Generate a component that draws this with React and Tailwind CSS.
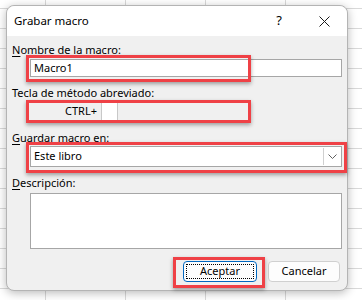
import React from 'react';

const Label = ({ mnemonic, rest }) => (
  <div className="h-[16px] leading-[16px] text-[11px] text-black">
    <span className="underline underline-offset-[2px]">{mnemonic}</span>
    {rest}
  </div>
);

// red annotation frames drawn over the dialog
const Highlight = ({ className }) => (
  <div
    className={`absolute border-[3px] border-[#ef4146] shadow-[0_2px_4px_rgba(0,0,0,0.35)] pointer-events-none ${className}`}
  />
);

export default function App() {
  return (
    <div
      className="relative w-[362px] h-[300px] overflow-hidden bg-white pt-[5px] pl-[6px] bg-[linear-gradient(to_right,#d9d9d9_1px,transparent_1px),linear-gradient(to_bottom,#d9d9d9_1px,transparent_1px)] bg-[size:80px_20px] bg-[position:45px_8px]"
      style={{ fontFamily: '"Noto Sans", "Open Sans", sans-serif' }}
    >
      <div className="w-[342px] h-[286px] rounded-[8px] bg-[#f0f0f0] border border-[#b4b4b4] shadow-[0_2px_10px_rgba(0,0,0,0.28)] flex flex-col">
        {/* title bar */}
        <div className="h-[30px] shrink-0 bg-white rounded-t-[8px] flex items-center pl-[7px] text-[11.5px] text-black">
          <span className="flex-1">Grabar macro</span>
          <span className="w-[10px] text-center text-[13px] mr-[35px]">?</span>
          <svg width="11" height="11" viewBox="0 0 11 11" className="mr-[17px]">
            <path d="M0.5 0.5 L10.5 10.5 M10.5 0.5 L0.5 10.5" stroke="#1a1a1a" strokeWidth="1" />
          </svg>
        </div>

        {/* body */}
        <div className="flex flex-col px-[5px] pt-[6px]">
          <Label mnemonic="N" rest="ombre de la macro:" />
          <div className="mt-[1px] ml-[18px] h-[18px] bg-white border border-[#a6a6a6] flex items-center pl-[3px] text-[11px] text-black">
            Macro1
          </div>

          <div className="mt-[8px] h-[16px] leading-[16px] text-[11px] text-black">Tecla de método abreviado:</div>
          <div className="mt-[1px] h-[19px] flex items-center">
            <span className="w-[85px] text-right text-[11px] text-black">CTRL+</span>
            <div className="ml-[4px] w-[17px] h-[19px] bg-white border-x border-[#c8c8c8]" />
          </div>

          <div className="mt-[9px]">
            <Label mnemonic="G" rest="uardar macro en:" />
          </div>
          <div className="ml-[18px] h-[21px] bg-white border border-[#a6a6a6] flex items-center text-[11px] text-black">
            <span className="flex-1 pl-[3px]">Este libro</span>
            <div className="w-[17px] h-[17px] mr-[1px] border-l border-[#d0d0d0] flex items-center justify-center">
              <svg width="9" height="5" viewBox="0 0 9 5">
                <path d="M0.5 0.5 L4.5 4.5 L8.5 0.5" fill="none" stroke="#606060" strokeWidth="1" />
              </svg>
            </div>
          </div>

          <div className="mt-[8px]">
            <Label mnemonic="D" rest="escripción:" />
          </div>
          <div className="mt-[2px] ml-[18px] h-[56px] bg-white border border-[#a6a6a6]" />

          <div className="mt-[12px] flex justify-end gap-[11px] pr-[2px]">
            <button className="w-[74px] h-[21px] rounded-[4px] border border-[#0067c0] bg-[#fdfdfd] p-[2px] text-[11px] text-black">
              <span className="flex w-full h-full items-center justify-center border border-dotted border-black">
                Aceptar
              </span>
            </button>
            <button className="w-[72px] h-[21px] rounded-[4px] border border-[#d0d0d0] bg-[#fdfdfd] text-[11px] text-black flex items-center justify-center">
              Cancelar
            </button>
          </div>
        </div>
      </div>

      <Highlight className="left-[26px] top-[55px] w-[225px] h-[27px]" />
      <Highlight className="left-[26px] top-[100px] w-[225px] h-[23px]" />
      <Highlight className="left-[26px] top-[142px] w-[321px] h-[31px]" />
      <Highlight className="left-[173px] top-[257px] w-[92px] h-[31px]" />
    </div>
  );
}
